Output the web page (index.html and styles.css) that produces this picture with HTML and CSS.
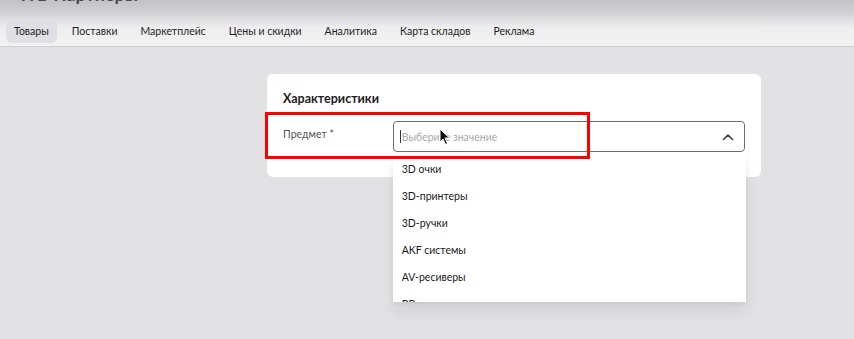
FILE: index.html
```html
<!DOCTYPE html>
<html lang="ru">
<head>
<meta charset="utf-8">
<link rel="stylesheet" href="styles.css">
</head>
<body>
<header class="topbar">
  <div class="brand">WB Партнеры</div>
</header>
<nav class="tabs">
  <span class="tab active">Товары</span>
  <span class="tab">Поставки</span>
  <span class="tab">Маркетплейс</span>
  <span class="tab">Цены и скидки</span>
  <span class="tab">Аналитика</span>
  <span class="tab">Карта складов</span>
  <span class="tab">Реклама</span>
</nav>
<main class="main">
  <section class="card">
    <h2 class="card-title">Характеристики</h2>
    <div class="field">
      <label class="field-label">Предмет *</label>
      <div class="select">
        <div class="select-box">
          <span class="caret"></span>
          <span class="placeholder">Выберите значение</span>
          <svg class="chevron" width="12" height="8" viewBox="0 0 12 8"><path d="M1.5 6.5 L6 2 L10.5 6.5" fill="none" stroke="#3a3a40" stroke-width="1.6" stroke-linecap="round" stroke-linejoin="round"/></svg>
        </div>
        <ul class="dropdown">
          <li>3D очки</li>
          <li>3D-принтеры</li>
          <li>3D-ручки</li>
          <li>AKF системы</li>
          <li>AV-ресиверы</li>
          <li>BB-кремы</li>
        </ul>
        <svg class="pointer" width="12" height="18" viewBox="0 0 12 18"><path d="M1 1 L1 14 L4 11 L6.5 16.5 L8.5 15.5 L6 10 L10.5 10 Z" fill="#111" stroke="#fff" stroke-width="1"/></svg>
      </div>
      <div class="highlight"></div>
    </div>
  </section>
</main>
</body>
</html>
```

FILE: styles.css
```css
* { box-sizing: border-box; }
html, body { margin: 0; padding: 0; }
body {
  width: 854px;
  height: 339px;
  overflow: hidden;
  background: #e2e1e4;
  font-family: Lato, "Noto Sans", sans-serif;
  color: #222;
}
.topbar {
  height: 16px;
  overflow: hidden;
  background: linear-gradient(#c2c1c5, #d5d5d7);
  padding-left: 18px;
}
.brand {
  font-size: 18px;
  font-weight: 700;
  color: #4a4a50;
  line-height: 18px;
  margin-top: -15px;
}
.tabs {
  height: 31px;
  display: flex;
  align-items: center;
  padding-left: 6px;
  background: linear-gradient(#dadadc, #eeeeef 40%, #f2f2f2);
  border-bottom: 1px solid #cfcfd2;
}
.tab {
  font-size: 10.5px;
  color: #1e1e24;
  padding: 5px 8px 6px;
  margin-right: 7px;
  border-radius: 6px;
  line-height: 12px;
}
.tab.active {
  background: #e0dfe3;
}
.main {
  padding: 27px 0 0 267px;
}
.card {
  width: 494px;
  height: 103px;
  background: #fff;
  border-radius: 6px;
  padding: 17px 16px 0 16px;
  position: relative;
}
.card-title {
  margin: 0;
  font-size: 12.5px;
  font-weight: 700;
  color: #1e1e22;
  line-height: 16px;
}
.field {
  display: flex;
  margin-top: 14px;
}
.field-label {
  width: 110px;
  font-size: 10.5px;
  color: #55555c;
  padding-top: 6px;
  line-height: 14px;
}
.select {
  position: relative;
  width: 353px;
}
.select-box {
  height: 31px;
  border: 1px solid #6d6c74;
  border-radius: 4px;
  display: flex;
  align-items: center;
  padding-left: 6px;
  padding-right: 10px;
}
.caret {
  width: 1px;
  height: 13px;
  background: #333;
  margin-right: 1px;
}
.placeholder {
  font-size: 10.5px;
  color: #a9a8ae;
  flex: 1;
}
.chevron { display: block; }
.dropdown {
  position: absolute;
  top: 32px;
  left: 0;
  width: 353px;
  height: 149px;
  overflow: hidden;
  margin: 0;
  padding: 3px 0 0 0;
  list-style: none;
  background: #fff;
  box-shadow: 0 10px 14px rgba(0,0,0,0.07), 0 2px 4px rgba(0,0,0,0.05);
  z-index: 2;
}
.dropdown li {
  height: 27px;
  line-height: 27px;
  padding-left: 9px;
  font-size: 10.5px;
  color: #1a1a1e;
}
.pointer {
  position: absolute;
  left: 46px;
  top: 7px;
  z-index: 3;
}
.highlight {
  position: absolute;
  left: -2px;
  top: 38px;
  width: 325px;
  height: 47px;
  border: 3px solid #ff0000;
  z-index: 4;
}
```
